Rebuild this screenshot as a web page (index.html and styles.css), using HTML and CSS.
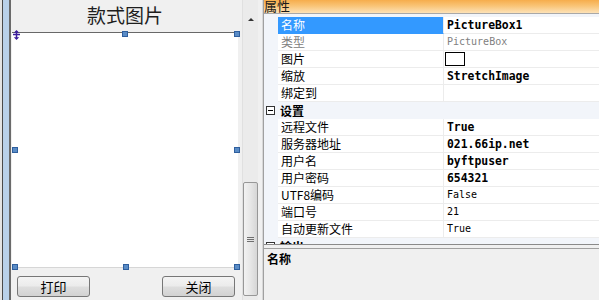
FILE: index.html
```html
<!DOCTYPE html>
<html>
<head>
<meta charset="utf-8">
<link rel="stylesheet" href="styles.css">
</head>
<body>
<div class="app">
  <div class="edge"></div>
  <div class="form">
    <div class="title">款式图片</div>
    <div class="picbox">
      <svg class="move" width="7" height="10" viewBox="0 0 7 10">
        <path d="M3.5 0 L0.8 2.8 H6.2 Z M3.5 10 L0.8 7.2 H6.2 Z" fill="#3b1c9c"/>
        <path d="M3.5 1 V9 M0 4.5 H7" stroke="#3b1c9c" stroke-width="1.5"/>
      </svg>
      <span class="h h-tm"></span>
      <span class="h h-tr"></span>
      <span class="h h-ml"></span>
      <span class="h h-mr"></span>
      <span class="h h-bl"></span>
      <span class="h h-bm"></span>
      <span class="h h-br"></span>
    </div>
    <div class="btns">
      <button class="btn">打印</button>
      <button class="btn">关闭</button>
    </div>
  </div>
  <div class="gap"></div>
  <div class="vscroll">
    <span class="arrow"></span>
    <div class="thumb"><span class="grip"></span></div>
  </div>
  <div class="split"></div>
  <div class="props">
    <div class="phead">属性</div>
    <div class="grid">
      <div class="row sel"><div class="gut"></div><div class="lbl">名称</div><div class="val b">PictureBox1</div></div>
      <div class="row"><div class="gut"></div><div class="lbl dis">类型</div><div class="val dis">PictureBox</div></div>
      <div class="row"><div class="gut"></div><div class="lbl">图片</div><div class="val"><span class="imgbox"></span></div></div>
      <div class="row"><div class="gut"></div><div class="lbl">缩放</div><div class="val b">StretchImage</div></div>
      <div class="row"><div class="gut"></div><div class="lbl">绑定到</div><div class="val"></div></div>
      <div class="cat"><span class="tog"></span><span class="catname">设置</span></div>
      <div class="row"><div class="gut"></div><div class="lbl">远程文件</div><div class="val b">True</div></div>
      <div class="row"><div class="gut"></div><div class="lbl">服务器地址</div><div class="val b">021.66ip.net</div></div>
      <div class="row"><div class="gut"></div><div class="lbl">用户名</div><div class="val b">byftpuser</div></div>
      <div class="row"><div class="gut"></div><div class="lbl">用户密码</div><div class="val b">654321</div></div>
      <div class="row"><div class="gut"></div><div class="lbl">UTF8编码</div><div class="val">False</div></div>
      <div class="row"><div class="gut"></div><div class="lbl">端口号</div><div class="val">21</div></div>
      <div class="row"><div class="gut"></div><div class="lbl">自动更新文件</div><div class="val">True</div></div>
      <div class="cat"><span class="tog"></span><span class="catname">输出</span></div>
    </div>
    <div class="desc"><b>名称</b></div>
  </div>
</div>
</body>
</html>
```

FILE: styles.css
```css
* { box-sizing: border-box; }
html, body { margin: 0; padding: 0; }
body {
  width: 599px;
  height: 300px;
  overflow: hidden;
  background: #f0f0f0;
  font-family: "Noto Sans CJK SC", "Liberation Sans", sans-serif;
  font-size: 12px;
  color: #000;
}
.app {
  display: flex;
  width: 599px;
  height: 300px;
}
.edge {
  width: 12px;
  flex: none;
  background: linear-gradient(to right, #e4e4e4 0 2px, #4a4a4a 2px 3px, #b9d1ea 3px 9px, #6a6a6a 9px 11px, #f0f0f0 11px);
}
.form {
  width: 226px;
  flex: none;
  display: flex;
  flex-direction: column;
}
.title {
  height: 32px;
  text-align: center;
  font-size: 19px;
  line-height: 30px;
  color: #1e1e1e;
}
.picbox {
  position: relative;
  height: 236px;
  background: #fff;
  border-top: 1px solid #686868;
  border-bottom: 1px solid #d6d6d6;
}
.move {
  position: absolute;
  left: 1px;
  top: -3px;
}
.h {
  position: absolute;
  width: 6px;
  height: 6px;
  background: #5a8cc6;
  border: 1px solid #2f5f9e;
}
.h-tm { left: 110px; top: -2px; }
.h-tr { left: 222px; top: -2px; }
.h-ml { left: 0; top: 114px; }
.h-mr { left: 222px; top: 114px; }
.h-bl { left: 0; top: 231px; }
.h-bm { left: 111px; top: 231px; }
.h-br { left: 222px; top: 231px; }
.btns {
  display: flex;
  justify-content: space-between;
  padding: 8px 3px 0 5px;
}
.btn {
  width: 73px;
  height: 21px;
  padding: 0;
  border: 1px solid #777;
  border-radius: 3px;
  background: linear-gradient(#f4f4f4, #ebebeb 48%, #dedede 52%, #d2d2d2);
  font-family: "Noto Sans CJK SC", sans-serif;
  font-size: 13px;
  line-height: 18px;
  color: #000;
}
.gap {
  width: 4px;
  flex: none;
}
.vscroll {
  width: 16px;
  flex: none;
  display: flex;
  flex-direction: column;
  align-items: center;
  background: #ebebeb;
  border-left: 1px solid #e0e0e0;
}
.arrow {
  margin-top: 18px;
  width: 0;
  height: 0;
  border-left: 3px solid transparent;
  border-right: 3px solid transparent;
  border-bottom: 3px solid #333;
}
.thumb {
  margin-top: auto;
  margin-bottom: 4px;
  width: 15px;
  height: 114px;
  border: 1px solid #979797;
  border-radius: 2px;
  background: linear-gradient(to right, #f2f2f2, #e6e6e6 50%, #d6d6d6);
  display: flex;
  align-items: center;
  justify-content: center;
}
.grip {
  width: 7px;
  height: 5px;
  background: repeating-linear-gradient(#6e6e6e 0 1px, transparent 1px 2px);
}
.split {
  width: 5px;
  flex: none;
  border-right: 1px solid #d8d8d8;
}
.props {
  flex: 1;
  display: flex;
  flex-direction: column;
  border-left: 1px solid #a0a0a0;
  min-width: 0;
}
.phead {
  height: 14px;
  flex: none;
  border-bottom: 1px solid #a8a8a8;
  background: linear-gradient(#f6ad4c, #f9c476 45%, #fde2b8);
  font-size: 13px;
  line-height: 12px;
  padding-left: 0;
  color: #1a1a1a;
}
.grid {
  height: 231px;
  flex: none;
  overflow: hidden;
  padding-top: 3px;
  background: #f2f5fa;
  border-bottom: 1px solid #8a8a8a;
}
.row {
  display: grid;
  grid-template-columns: 14px 166px 1fr;
  height: 17px;
}
.gut { background: #f2f5fa; }
.lbl {
  background: #fff;
  border-right: 1px solid #ececec;
  border-bottom: 1px solid #ececec;
  padding-left: 3px;
  line-height: 16px;
  white-space: nowrap;
}
.val {
  background: #fff;
  border-bottom: 1px solid #ececec;
  padding-left: 3px;
  font-family: "DejaVu Sans Mono", "Liberation Mono", monospace;
  font-size: 10px;
  line-height: 16px;
  white-space: nowrap;
}
.val.b {
  font-weight: bold;
  font-size: 11.4px;
}
.dis { color: #808080; }
.sel .lbl {
  background: #3399ff;
  color: #fff;
  border-bottom-color: #3399ff;
}
.imgbox {
  display: inline-block;
  width: 20px;
  height: 14px;
  border: 1px solid #000;
  margin-left: -2px;
  margin-top: 1px;
  vertical-align: top;
}
.cat {
  display: flex;
  align-items: center;
  height: 17px;
  background: #f2f5fa;
}
.tog {
  position: relative;
  width: 9px;
  height: 9px;
  margin-left: 2px;
  border: 1px solid #333;
  background: #fff;
}
.tog::after {
  content: "";
  position: absolute;
  left: 1px;
  top: 3px;
  width: 5px;
  height: 1px;
  background: #000;
}
.catname {
  margin-left: 5px;
  font-weight: bold;
  line-height: 16px;
}
.desc {
  flex: 1;
  margin-top: 3px;
  border-top: 1px solid #a0a0a0;
  padding: 3px 0 0 3px;
  line-height: 14px;
  font-size: 12px;
}
```
